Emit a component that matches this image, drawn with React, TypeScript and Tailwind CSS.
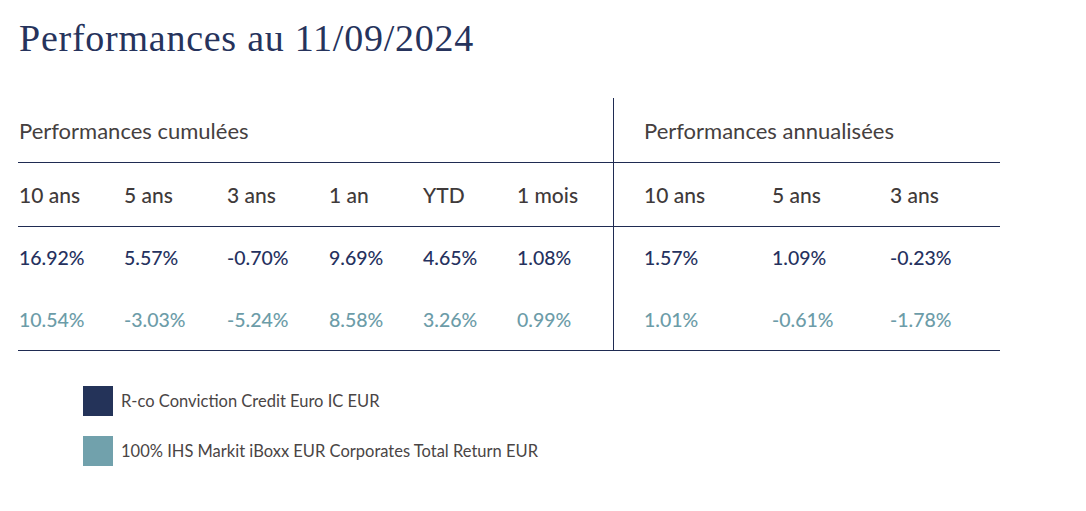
import React from "react";

const left = ["10 ans", "5 ans", "3 ans", "1 an", "YTD", "1 mois"];
const leftW = ["w-[105px]", "w-[103px]", "w-[102px]", "w-[94px]", "w-[94px]", "w-[96px]"];
const right = ["10 ans", "5 ans", "3 ans"];
const rightW = ["w-[128px]", "w-[118px]", "w-[110px]"];

const fundL = ["16.92%", "5.57%", "-0.70%", "9.69%", "4.65%", "1.08%"];
const fundR = ["1.57%", "1.09%", "-0.23%"];
const benchL = ["10.54%", "-3.03%", "-5.24%", "8.58%", "3.26%", "0.99%"];
const benchR = ["1.01%", "-0.61%", "-1.78%"];

function Row({ l, r, cls, h }: { l: string[]; r: string[]; cls: string; h: string }) {
  return (
    <div className={`flex ${h} items-stretch`}>
      <div className="flex w-[595px] items-center pl-[1px]">
        {l.map((t, i) => (
          <div key={i} className={`${leftW[i]} ${cls}`}>{t}</div>
        ))}
      </div>
      <div className="flex items-center border-l border-[#1f2b52] pl-[30px]">
        {r.map((t, i) => (
          <div key={i} className={`${rightW[i]} ${cls}`}>{t}</div>
        ))}
      </div>
    </div>
  );
}

export default function App() {
  const sans = "font-['Lato',sans-serif]";
  return (
    <div className="w-[1086px] h-[511px] bg-white">
      <h1 className="pl-[19px] pt-[14px] font-['Liberation_Serif',serif] text-[38px] leading-[48px] text-[#26335c] tracking-[0.75px]">
        Performances au 11/09/2024
      </h1>
      <div className={`ml-[18px] mt-[36px] w-[982px] ${sans}`}>
        <div className="flex h-[65px] border-b border-[#1f2b52]">
          <div className="flex w-[595px] items-center pl-[1px] text-[22px] text-[#454040]">Performances cumulées</div>
          <div className="flex items-center border-l border-[#1f2b52] pl-[30px] text-[22px] text-[#454040]">Performances annualisées</div>
        </div>
        <div className="border-b border-[#1f2b52]">
          <Row l={left} r={right} cls="text-[21px] text-[#3f3a3a] font-medium" h="h-[63px]" />
        </div>
        <Row l={fundL} r={fundR} cls="text-[19.5px] text-[#25315e] font-medium" h="h-[62px]" />
        <div className="border-b border-[#1f2b52]">
          <Row l={benchL} r={benchR} cls="text-[19.5px] text-[#6c9ca8] font-medium" h="h-[61px]" />
        </div>
      </div>
      <div className={`ml-[83px] mt-[35px] flex flex-col gap-[20px] ${sans}`}>
        <div className="flex items-center gap-[8px]">
          <div className="h-[30px] w-[30px] bg-[#243359]" />
          <span className="text-[16.5px] text-[#4a4545]">R-co Conviction Credit Euro IC EUR</span>
        </div>
        <div className="flex items-center gap-[8px]">
          <div className="h-[30px] w-[30px] bg-[#71a1ac]" />
          <span className="text-[16.5px] text-[#4a4545]">100% IHS Markit iBoxx EUR Corporates Total Return EUR</span>
        </div>
      </div>
    </div>
  );
}
